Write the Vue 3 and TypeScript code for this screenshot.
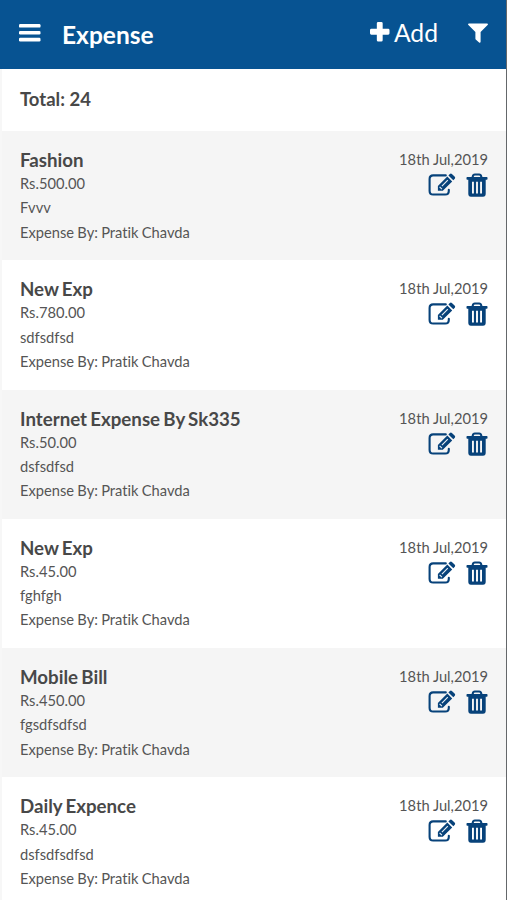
<script setup lang="ts">
interface Expense {
  title: string
  amount: string
  note: string
  by: string
  date: string
}

const by = 'Pratik Chavda'
const date = '18th Jul,2019'

const expenses: Expense[] = [
  { title: 'Fashion', amount: '500.00', note: 'Fvvv', by, date },
  { title: 'New Exp', amount: '780.00', note: 'sdfsdfsd', by, date },
  { title: 'Internet Expense By Sk335', amount: '50.00', note: 'dsfsdfsd', by, date },
  { title: 'New Exp', amount: '45.00', note: 'fghfgh', by, date },
  { title: 'Mobile Bill', amount: '450.00', note: 'fgsdfsdfsd', by, date },
  { title: 'Daily Expence', amount: '45.00', note: 'dsfsdfsdfsd', by, date },
]
</script>

<template>
  <div class="screen">
    <header class="bar">
      <svg class="menu" viewBox="0 0 22 18" width="22" height="18">
        <rect x="0" y="0" width="21.500" height="3.600" rx="1.200" />
        <rect x="0" y="6.900" width="21.500" height="3.600" rx="1.200" />
        <rect x="0" y="13.800" width="21.500" height="3.600" rx="1.200" />
      </svg>
      <h1>Expense</h1>
      <div class="add">
        <svg viewBox="0 0 20 20" width="19.500" height="19.500">
          <path d="M8.400 0h3.200q1.400 0 1.400 1.400V7h5.600Q20 7 20 8.400v3.200q0 1.400-1.400 1.400H13v5.600q0 1.400-1.400 1.400H8.400Q7 20 7 18.600V13H1.400Q0 13 0 11.600V8.400Q0 7 1.400 7H7V1.400Q7 0 8.400 0Z" />
        </svg>
        <span>Add</span>
      </div>
      <svg class="filter" viewBox="0 0 20 20" width="20" height="20">
        <path d="M1 .5h18q1.500.2.6 1.600L12.600 9V18.800q-.2 1.400-1.500.7L8 16.700Q7.400 16.300 7.400 15.800V9L.4 2.100Q-.5.700 1 .5Z" />
      </svg>
    </header>

    <div class="total">Total: 24</div>

    <ul class="list">
      <li v-for="(item, i) in expenses" :key="i" class="row">
        <div class="info">
          <h2>{{ item.title }}</h2>
          <p>Rs.{{ item.amount }}</p>
          <p>{{ item.note }}</p>
          <p>Expense By: {{ item.by }}</p>
        </div>
        <div class="side">
          <span class="date">{{ item.date }}</span>
          <div class="actions">
            <svg viewBox="0 0 28 24" width="28" height="24">
              <path class="line" d="M17.800 2.400H5.200Q1.600 2.400 1.600 6V17.900Q1.600 21.500 5.200 21.500H17.200Q20.800 21.500 20.800 17.900V16.800" />
              <path d="M19.300 3.500 24.200 8.400 14.800 17.800H9.900V12.900ZM20.400 2.400 21.900.9Q22.900.1 23.900.9L26.800 3.800Q27.600 4.800 26.800 5.800L25.300 7.300Z" />
              <path class="cut" d="M13.900 13.100 19.800 7.200M11.600 13.800 13.900 16.100" />
            </svg>
            <svg viewBox="0 0 22 24" width="22" height="24">
              <path class="line" d="M6.400 4.700 7 2.700Q7.400 1.500 8.700 1.500H13.300Q14.600 1.500 15 2.700L15.600 4.700" />
              <path fill-rule="evenodd" d="M1.200 4H20.800Q21.500 4 21.500 4.700V6Q21.500 6.700 20.800 6.700H19.700V20.700Q19.700 23.700 17 23.700H5Q2.300 23.700 2.300 20.700V6.700H1.200Q.5 6.700.5 6V4.700Q.5 4 1.200 4ZM6 8.800V20.400H7.900V8.800ZM10.050 8.800V20.400H11.950V8.800ZM14.100 8.800V20.400H16V8.800Z" />
            </svg>
          </div>
        </div>
      </li>
    </ul>
  </div>
</template>

<style>
body {
  margin: 0;
  overflow: hidden;
}
</style>

<style scoped>
.screen {
  box-sizing: border-box;
  height: 900px;
  overflow: hidden;
  border-right: 1px solid #64676a;
  background: #fff;
  color: #484848;
  font-family: Lato, "Liberation Sans", sans-serif;
  font-variant-ligatures: none;
}

.bar {
  box-sizing: border-box;
  display: flex;
  align-items: center;
  height: 69px;
  padding: 0 18px 4px 19px;
  background: #075392;
  color: #fff;
}

.bar svg {
  fill: #fff;
}

h1 {
  margin: 5px 0 0 21px;
  font-size: 24.500px;
  line-height: 30px;
  font-weight: 700;
}

.add {
  display: flex;
  align-items: center;
  gap: 4px;
  margin-left: auto;
  font-size: 24.700px;
  line-height: 30px;
}

.add svg {
  margin-top: -1px;
}

.filter {
  margin-left: 30px;
}

.total {
  box-sizing: border-box;
  height: 62px;
  padding: 18px 20px 0 18px;
  border-left: 2px solid #f7f7f7;
  font-size: 18.500px;
  line-height: 24px;
  font-weight: 700;
}

.list {
  margin: 0;
  padding: 0;
  list-style: none;
}

.row {
  box-sizing: border-box;
  display: flex;
  justify-content: space-between;
  height: 129.300px;
  padding: 17px 18px 0 18px;
  border-left: 2px solid #f7f7f7;
}

.row:nth-child(odd) {
  background: #f5f5f5;
}

h2 {
  margin: 0 0 -1px;
  font-size: 18.700px;
  line-height: 24px;
  font-weight: 700;
  word-spacing: -1.300px;
}

p {
  margin: 0;
  font-size: 14.700px;
  line-height: 24.300px;
  color: #555;
  word-spacing: -0.500px;
}

.side {
  display: flex;
  flex-direction: column;
  align-items: flex-end;
}

.date {
  margin-top: -1px;
  font-size: 14.700px;
  line-height: 24px;
  color: #555;
}

.actions {
  display: flex;
  gap: 10px;
  margin-top: 2px;
}

.actions svg {
  fill: #07427a;
}

.actions .line {
  fill: none;
  stroke: #07427a;
  stroke-width: 2.100;
  stroke-linecap: round;
}

.actions .cut {
  fill: none;
  stroke: #e8eff5;
  stroke-width: 1.200;
}
</style>
